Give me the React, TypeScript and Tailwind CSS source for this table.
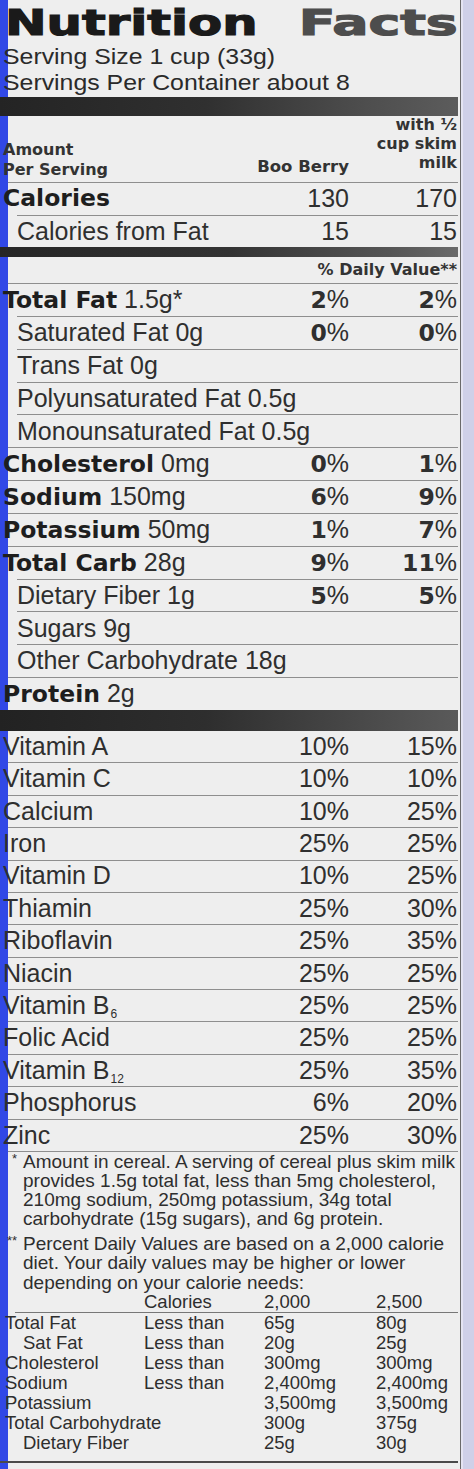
import React from "react";

const SANS = "font-['Liberation_Sans',Arial,sans-serif]";
const BOLD = "font-['DejaVu_Sans',Verdana,sans-serif] font-bold";

type N = {
  label: string;
  amt?: string;
  v1?: string;
  v2?: string;
  indent?: boolean;
  boldLabel?: boolean;
};

const nutrients: N[] = [
  { label: "Total Fat", amt: "1.5g*", v1: "2", v2: "2", boldLabel: true },
  { label: "Saturated Fat 0g", v1: "0", v2: "0", indent: true },
  { label: "Trans Fat 0g", indent: true },
  { label: "Polyunsaturated Fat 0.5g", indent: true },
  { label: "Monounsaturated Fat 0.5g", indent: true },
  { label: "Cholesterol", amt: "0mg", v1: "0", v2: "1", boldLabel: true },
  { label: "Sodium", amt: "150mg", v1: "6", v2: "9", boldLabel: true },
  { label: "Potassium", amt: "50mg", v1: "1", v2: "7", boldLabel: true },
  { label: "Total Carb", amt: "28g", v1: "9", v2: "11", boldLabel: true },
  { label: "Dietary Fiber 1g", v1: "5", v2: "5", indent: true },
  { label: "Sugars 9g", indent: true },
  { label: "Other Carbohydrate 18g", indent: true },
  { label: "Protein", amt: "2g", boldLabel: true },
];

type V = { name: string; sub?: string; v1: string; v2: string };

const vitamins: V[] = [
  { name: "Vitamin A", v1: "10%", v2: "15%" },
  { name: "Vitamin C", v1: "10%", v2: "10%" },
  { name: "Calcium", v1: "10%", v2: "25%" },
  { name: "Iron", v1: "25%", v2: "25%" },
  { name: "Vitamin D", v1: "10%", v2: "25%" },
  { name: "Thiamin", v1: "25%", v2: "30%" },
  { name: "Riboflavin", v1: "25%", v2: "35%" },
  { name: "Niacin", v1: "25%", v2: "25%" },
  { name: "Vitamin B", sub: "6", v1: "25%", v2: "25%" },
  { name: "Folic Acid", v1: "25%", v2: "25%" },
  { name: "Vitamin B", sub: "12", v1: "25%", v2: "35%" },
  { name: "Phosphorus", v1: "6%", v2: "20%" },
  { name: "Zinc", v1: "25%", v2: "30%" },
];

const table: string[][] = [
  ["Total Fat", "Less than", "65g", "80g"],
  [" Sat Fat", "Less than", "20g", "25g"],
  ["Cholesterol", "Less than", "300mg", "300mg"],
  ["Sodium", "Less than", "2,400mg", "2,400mg"],
  ["Potassium", "", "3,500mg", "3,500mg"],
  ["Total Carbohydrate", "", "300g", "375g"],
  [" Dietary Fiber", "", "25g", "30g"],
];

function Pct({ d }: { d?: string }) {
  if (!d) return null;
  return (
    <>
      <span className={`${BOLD} text-[23.5px]`}>{d}</span>%
    </>
  );
}

function Rule({ indent }: { indent?: boolean }) {
  return <div className={`h-px bg-[#8e8e8e] ${indent ? "ml-[14px]" : "ml-[5px]"}`} />;
}

export default function App() {
  return (
    <div className="w-[474px] h-[1469px] flex overflow-hidden">
      <div className="w-[461px] h-full border-r border-[#6a6a6a] bg-[linear-gradient(to_right,#3148e6_0px,#3148e6_8px,#eeeeee_8px)] pl-[3px] pr-[2px] text-[#2f2f2f]">
        {/* Title */}
        <div className="pt-[1px]">
          <div
            className={`${BOLD} text-[36px] leading-[43px] h-[43px] flex justify-between pl-[2px] [-webkit-text-stroke:1.2px_currentColor]`}
          >
            <span className="inline-block origin-left scale-x-[1.38] text-[#1a1a1a]">Nutrition</span>
            <span className="inline-block origin-right scale-x-[1.49] text-[#4d4d4d]">Facts</span>
          </div>
        </div>

        {/* Serving info */}
        <div className={`${SANS} text-[22.8px] leading-[25.5px] text-[#2a2a2a] whitespace-nowrap origin-left scale-x-[1.09]`}>
          <div>Serving Size 1 cup (33g)</div>
          <div>Servings Per Container about 8</div>
        </div>

        {/* Thick bar */}
        <div className="mt-[2px] h-[19px] -ml-[3px] bg-[linear-gradient(to_right,#242424,#303030_45%,#4e4e4e_80%,#5c5c5c)]" />

        {/* Header */}
        <div className={`${BOLD} text-[16px] h-[66px] flex items-end text-[#333]`}>
          <div className="flex-1 leading-[20px] pb-[2px]">
            <div>Amount</div>
            <div>Per Serving</div>
          </div>
          <div className="w-[100px] text-right pr-[1px] leading-[19px] pb-[6px] text-[16.5px]">Boo Berry</div>
          <div className="w-[108px] text-right pr-[1px] leading-[19px] pb-[10px]">
            <div>with ½</div>
            <div>cup skim</div>
            <div>milk</div>
          </div>
        </div>

        <Rule />
        {/* Calories */}
        <div className="h-[32px] flex items-center text-[25px]">
          <div className={`flex-1 ${BOLD} text-[23.5px] text-[#1e1e1e]`}>Calories</div>
          <div className={`${SANS} w-[100px] text-right pr-[1px]`}>130</div>
          <div className={`${SANS} w-[108px] text-right pr-[1px]`}>170</div>
        </div>
        <Rule indent />
        <div className={`${SANS} h-[31px] flex items-center text-[25px]`}>
          <div className="flex-1 pl-[14px]">Calories from Fat</div>
          <div className="w-[100px] text-right pr-[1px]">15</div>
          <div className="w-[108px] text-right pr-[1px]">15</div>
        </div>

        {/* Medium bar */}
        <div className="h-[10px] -ml-[3px] bg-[linear-gradient(to_right,#262626,#333_50%,#555_85%,#6a6a6a)]" />

        <div className={`${BOLD} h-[26px] leading-[26px] text-right pr-[1px] text-[16px] text-[#333]`}>
          % Daily Value**
        </div>

        {/* Nutrients */}
        {nutrients.map((n, i) => (
          <div key={i}>
            <Rule indent={n.indent} />
            <div className={`${SANS} h-[31.85px] flex items-center text-[25px]`}>
              <div className={`flex-1 whitespace-nowrap ${n.indent ? "pl-[14px]" : ""}`}>
                {n.boldLabel ? (
                  <>
                    <span className={`${BOLD} text-[23.5px] text-[#1e1e1e]`}>{n.label}</span> {n.amt}
                  </>
                ) : (
                  n.label
                )}
              </div>
              <div className="w-[100px] text-right pr-[1px]">
                <Pct d={n.v1} />
              </div>
              <div className="w-[108px] text-right pr-[1px]">
                <Pct d={n.v2} />
              </div>
            </div>
          </div>
        ))}

        {/* Thick bar */}
        <div className="h-[21px] -ml-[3px] bg-[linear-gradient(to_right,#222,#2e2e2e_45%,#4a4a4a_80%,#5a5a5a)]" />

        {/* Vitamins */}
        {vitamins.map((v, i) => (
          <div key={i}>
            <div className={`${SANS} h-[31.4px] flex items-center text-[25px]`}>
              <div className="flex-1 whitespace-nowrap">
                {v.name}
                {v.sub && <span className="text-[12px] align-[-4px] leading-none ml-[1px]">{v.sub}</span>}
              </div>
              <div className="w-[100px] text-right pr-[1px]">{v.v1}</div>
              <div className="w-[108px] text-right pr-[1px]">{v.v2}</div>
            </div>
            <Rule />
          </div>
        ))}

        {/* Footnotes */}
        <div className={`${SANS} text-[19px] leading-[19px] text-[#2e2e2e] flex whitespace-nowrap`}>
          <div className="w-[20px] pl-[9px] text-[13px] leading-[13px]">*</div>
          <div>
            Amount in cereal. A serving of cereal plus skim milk
            <br />
            provides 1.5g total fat, less than 5mg cholesterol,
            <br />
            210mg sodium, 250mg potassium, 34g total
            <br />
            carbohydrate (15g sugars), and 6g protein.
          </div>
        </div>
        <div className={`${SANS} mt-[6px] text-[19px] leading-[19.3px] text-[#2e2e2e] flex whitespace-nowrap`}>
          <div className="w-[20px] pl-[4px] text-[13px] leading-[13px]">**</div>
          <div>
            Percent Daily Values are based on a 2,000 calorie
            <br />
            diet. Your daily values may be higher or lower
            <br />
            depending on your calorie needs:
          </div>
        </div>

        {/* Calorie table */}
        <div className={`${SANS} text-[18.5px] leading-[20px] text-[#2e2e2e] whitespace-nowrap`}>
          <div className="grid grid-cols-[139px_120px_112px_1fr] pl-[2px]">
            <div />
            <div>Calories</div>
            <div>2,000</div>
            <div>2,500</div>
          </div>
          <div className="h-px bg-[#777] ml-[12px]" />
          {table.map((r, i) => (
            <div key={i} className="grid grid-cols-[139px_120px_112px_1fr] pl-[2px]">
              <div className={r[0].startsWith(" ") ? "pl-[18px]" : ""}>{r[0].trim()}</div>
              <div>{r[1]}</div>
              <div>{r[2]}</div>
              <div>{r[3]}</div>
            </div>
          ))}
          <div className="mt-[8px] h-[2px] -ml-[3px] bg-[#4a4a4a]" />
        </div>
      </div>
      <div className="flex-1 h-full bg-[#cfd0e8] border-l-2 border-[#e4e4f2]" />
    </div>
  );
}
